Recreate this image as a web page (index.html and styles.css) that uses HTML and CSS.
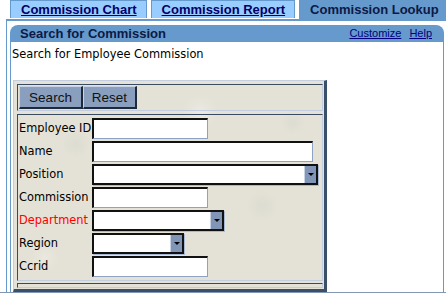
FILE: index.html
```html
<!DOCTYPE html>
<html lang="en">
<head>
  <meta charset="UTF-8" />
  <title>Commission Lookup</title>
  <link rel="stylesheet" href="styles.css">
</head>
<body>

<div class="page">
  <div class="tabs">
    <a class="tab" href="#">Commission Chart</a>
    <a class="tab" href="#">Commission Report</a>
    <span class="tab tab-active">Commission Lookup</span>
  </div>

  <div class="frame">
    <div class="portlet">
      <div class="portlet-head">
        <span class="portlet-title">Search for Commission</span>
        <span class="portlet-links"><a href="#">Customize</a><a href="#">Help</a></span>
      </div>

      <div class="portlet-body">
        <p class="intro">Search for Employee Commission</p>

        <!-- search form -->
        <div class="panel">
          <div class="toolbar">
            <button class="btn btn-search">Search</button>
            <button class="btn btn-reset">Reset</button>
          </div>

          <div class="fields">
            <label>Employee ID</label>
            <input class="w116">

            <label>Name</label>
            <input class="w221">

            <label>Position</label>
            <span class="combo w226"><select></select><span class="combo-btn"></span></span>

            <label>Commission</label>
            <input class="w116">

            <label class="required">Department</label>
            <span class="combo w132"><select></select><span class="combo-btn"></span></span>

            <label>Region</label>
            <span class="combo w92"><select></select><span class="combo-btn"></span></span>

            <label>Ccrid</label>
            <input class="w116">
          </div>

          <div class="panel-foot"></div>
        </div>
      </div>
    </div>
  </div>
</div>

</body>
</html>
```

FILE: styles.css
```css
body {
  margin: 0;
  font-family: "DejaVu Sans", sans-serif;
  font-size: 11.4px;
  color: #000;
  background: #fff;
}
.page {
  height: 292px;
  border-bottom: 1px solid #8397b4;
  display: flex;
  flex-direction: column;
  overflow: hidden;
}

/* tabs */
.tabs {
  display: flex;
  align-items: flex-start;
  gap: 4px;
  height: 19px;
  padding-left: 10px;
}
.tab {
  box-sizing: border-box;
  height: 18px;
  padding: 0 9px 0 10px;
  background: #99ccff;
  border: 1px solid #6699cc;
  border-bottom: none;
  font: bold 13px/17px "Liberation Sans", Arial, sans-serif;
  color: #000066;
  text-decoration: underline;
  white-space: nowrap;
}
.tab-active {
  flex: 1;
  height: 19px;
  background: #6699cc;
  text-decoration: none;
  color: #0c1a44;
}

/* portlet frame */
.frame {
  flex: 1;
  margin-left: 6px;
  border-top: 2px solid #6699cc;
  border-left: 1px solid #6699cc;
  padding: 4px 2px 0 3px;
  display: flex;
  flex-direction: column;
}
.portlet {
  flex: 1;
  display: flex;
  flex-direction: column;
}
.portlet-head {
  height: 17px;
  background: #6699cc;
  border-radius: 8px 8px 0 0;
  display: flex;
  justify-content: space-between;
  align-items: center;
  padding: 0 12px 0 10px;
}
.portlet-title {
  font: bold 13px/17px "Liberation Sans", Arial, sans-serif;
  color: #0c1a44;
}
.portlet-links {
  display: flex;
  gap: 8px;
  font: 11px/17px "Liberation Sans", Arial, sans-serif;
}
.portlet-links a {
  color: #000080;
}
.portlet-body {
  flex: 1;
  background: #fff;
  border-left: 1px solid #6699cc;
  border-right: 1px solid #6699cc;
  padding: 5px 0 0 1px;
}
.intro {
  margin: 0;
  line-height: 14px;
}

/* search panel */
.panel {
  width: 306px;
  margin: 19px 0 0 1px;
  padding: 3px 1px 1px 3px;
  border-top: 1px solid #c3cde0;
  border-left: 1px solid #c3cde0;
  border-right: 3px solid #3a5068;
  border-bottom: 3px solid #3a5068;
  background-color: #e4e2d6;
  background-image:
    radial-gradient(circle at 20% 30%, #dcdcd2 0, transparent 14px),
    radial-gradient(circle at 60% 15%, #ebe9e1 0, transparent 18px),
    radial-gradient(circle at 80% 60%, #dddcd2 0, transparent 16px),
    radial-gradient(circle at 40% 75%, #dedcd3 0, transparent 18px),
    radial-gradient(circle at 10% 85%, #eae8df 0, transparent 14px),
    radial-gradient(circle at 90% 20%, #dddcd3 0, transparent 12px);
}
.toolbar {
  display: flex;
  padding: 1px;
  border-top: 1px solid #3a4a60;
  border-left: 1px solid #3a4a60;
  border-bottom: 1px solid #c3cde0;
  border-right: 1px solid #c3cde0;
}
.btn {
  box-sizing: border-box;
  height: 23px;
  margin: 0;
  padding: 0;
  background: #8a9fbe;
  border-top: 1px solid #c9d3e3;
  border-left: 1px solid #c9d3e3;
  border-right: 2px solid #1e2a3a;
  border-bottom: 2px solid #1e2a3a;
  font: 13.5px "Liberation Sans", Arial, sans-serif;
  color: #111;
}
.btn-search { width: 64px; }
.btn-reset { width: 54px; }

.fields {
  margin-top: 3px;
  padding: 3px 0 3px 1px;
  border-top: 1px solid #3a4a60;
  border-left: 1px solid #3a4a60;
  border-bottom: 1px solid #c3cde0;
  border-right: 1px solid #c3cde0;
  display: grid;
  grid-template-columns: 73px auto;
  row-gap: 2px;
  align-items: center;
  justify-items: start;
}
.fields label {
  line-height: 21px;
}
.fields label.required {
  color: #ff0000;
}
.fields input {
  box-sizing: border-box;
  height: 21px;
  margin: 0;
  background: #fff;
  border-style: solid;
  border-width: 2px 1px 1px 2px;
  border-color: #111 #8ea2c2 #8ea2c2 #111;
}
.combo {
  position: relative;
  box-sizing: border-box;
  height: 21px;
  border: 2px solid #111;
  box-shadow: 1px 1px 0 #a9b9d3;
  background: #fff;
}
.combo select {
  width: 100%;
  height: 100%;
  border: none;
  background: transparent;
  appearance: none;
}
.combo-btn {
  position: absolute;
  top: 0;
  right: 0;
  bottom: 0;
  width: 11px;
  background: #8196b6;
  border-left: 1px solid #c9d3e3;
}
.combo-btn::after {
  content: "";
  position: absolute;
  left: 3px;
  top: 7px;
  border-left: 3px solid transparent;
  border-right: 3px solid transparent;
  border-top: 3px solid #000;
}
.w92 { width: 92px; }
.w116 { width: 116px; }
.w132 { width: 132px; }
.w221 { width: 221px; }
.w226 { width: 226px; }

.panel-foot {
  height: 3px;
  margin-top: 2px;
  border-top: 1px solid #3a4a60;
  border-left: 1px solid #3a4a60;
  border-bottom: 1px solid #c3cde0;
  border-right: 1px solid #c3cde0;
}
```
